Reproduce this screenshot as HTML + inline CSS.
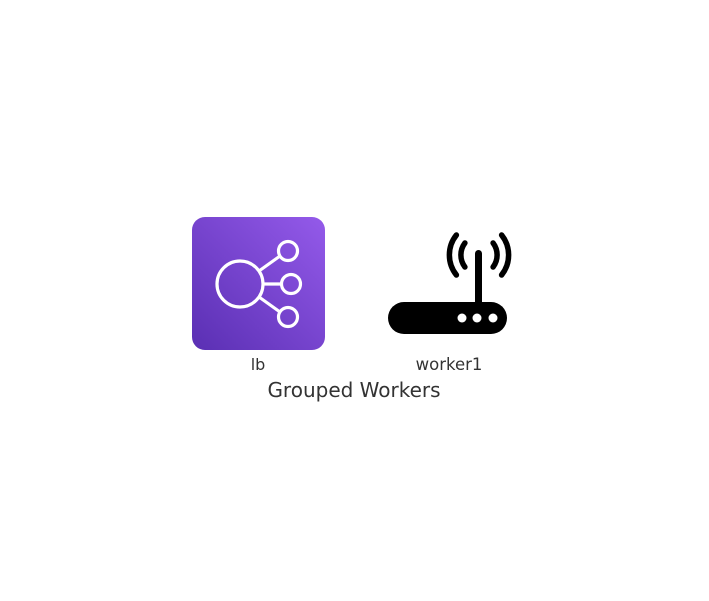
<!DOCTYPE html>
<html><head><style>
body{margin:0;width:709px;height:601px;background:#fff;position:relative;font-family:"DejaVu Sans","Liberation Sans",sans-serif;color:#333;}
.t{position:absolute;white-space:nowrap;transform:translateX(-50%);}
</style></head><body>
<svg width="709" height="601" style="position:absolute;left:0;top:0">
<defs><linearGradient id="g" x1="0" y1="1" x2="1" y2="0">
<stop offset="0" stop-color="#5a2fb3"/><stop offset="1" stop-color="#945aea"/></linearGradient></defs>
<rect x="192" y="217" width="133" height="133" rx="13" fill="url(#g)"/>
<g fill="none" stroke="#fff" stroke-width="3.2">
<circle cx="240" cy="284" r="23"/>
<circle cx="288" cy="251" r="9.5"/>
<circle cx="291" cy="284" r="9.5"/>
<circle cx="288" cy="317" r="9.5"/>
<line x1="263" y1="284" x2="281.5" y2="284"/>
<line x1="259" y1="271" x2="280" y2="256"/>
<line x1="259" y1="297" x2="280" y2="312"/>
</g>
<rect x="388" y="302" width="119" height="32" rx="16" fill="#000"/>
<rect x="475" y="250" width="7" height="56" rx="3.5" fill="#000"/>
<g fill="#fff"><circle cx="462" cy="318" r="4.5"/><circle cx="477" cy="318" r="4.5"/><circle cx="493" cy="318" r="4.5"/></g>
<g fill="none" stroke="#000" stroke-width="5.5" stroke-linecap="round">
<path d="M456.4 235 A32 32 0 0 0 456.4 275"/>
<path d="M501.6 235 A32 32 0 0 1 501.6 275"/>
<path d="M464.9 243 A20 20 0 0 0 464.9 267"/>
<path d="M493.1 243 A20 20 0 0 1 493.1 267"/>
</g>
</svg>
<div class="t" style="left:258px;top:355px;font-size:16px">lb</div>
<div class="t" style="left:449px;top:355px;font-size:16.5px">worker1</div>
<div class="t" style="left:354px;top:378px;font-size:20px">Grouped Workers</div>
</body></html>
